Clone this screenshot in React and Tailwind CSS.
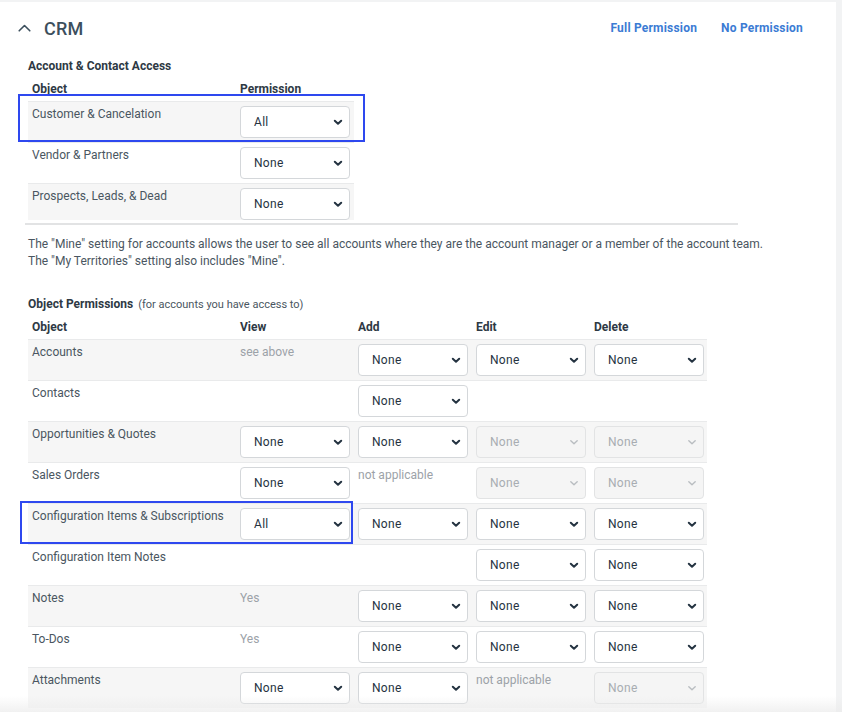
import React from 'react';

const accessRows = [
  { name: 'Customer & Cancelation', value: 'All', boxed: true },
  { name: 'Vendor & Partners', value: 'None' },
  { name: 'Prospects, Leads, & Dead', value: 'None' },
];

// cell: string = select value, {t} = muted text, {d} = disabled select, null = empty
const objectRows = [
  { name: 'Accounts', cells: [{ t: 'see above' }, 'None', 'None', 'None'] },
  { name: 'Contacts', cells: [null, 'None', null, null] },
  { name: 'Opportunities & Quotes', cells: ['None', 'None', { d: 'None' }, { d: 'None' }] },
  { name: 'Sales Orders', cells: ['None', { t: 'not applicable' }, { d: 'None' }, { d: 'None' }] },
  { name: 'Configuration Items & Subscriptions', cells: ['All', 'None', 'None', 'None'], boxed: true },
  { name: 'Configuration Item Notes', cells: [null, null, 'None', 'None'] },
  { name: 'Notes', cells: [{ t: 'Yes' }, 'None', 'None', 'None'] },
  { name: 'To-Dos', cells: [{ t: 'Yes' }, 'None', 'None', 'None'] },
  { name: 'Attachments', cells: ['None', 'None', { t: 'not applicable' }, { d: 'None' }] },
];

function Chevron({ muted }) {
  return (
    <svg width="10" height="7" viewBox="0 0 10 7" fill="none">
      <path
        d="M1.8 1.8L5 4.8L8.2 1.8"
        stroke={muted ? '#b9bdc1' : '#243341'}
        strokeWidth={muted ? '1.4' : '2'}
        strokeLinecap="round"
        strokeLinejoin="round"
      />
    </svg>
  );
}

function Select({ value, disabled }) {
  return (
    <div
      className={
        'w-[110px] h-[32px] rounded-[4px] border flex items-center justify-between pl-[13px] pr-[6px] text-[12px] tracking-[0.3px] ' +
        (disabled
          ? 'bg-[#f5f5f5] border-[#e2e3e4] text-[#a8adb2]'
          : 'bg-white border-[#d4d7da] text-[#26333f]')
      }
    >
      <span>{value}</span>
      <Chevron muted={disabled} />
    </div>
  );
}

function Cell({ cell }) {
  if (cell === null) return <div />;
  if (typeof cell === 'string')
    return (
      <div className="pt-[4px]">
        <Select value={cell} />
      </div>
    );
  if (cell.d)
    return (
      <div className="pt-[4px]">
        <Select value={cell.d} disabled />
      </div>
    );
  return <div className="pt-[4px] text-[12px] leading-[16px] text-[#9ca2a8]">{cell.t}</div>;
}

export default function App() {
  return (
    <div className="w-[842px] h-[712px] bg-[#f2f3f4] pt-[2px] pr-[6px] overflow-hidden relative font-['Roboto','Liberation_Sans',sans-serif]">
      <div className="bg-white h-full">
        {/* Section header */}
        <div className="h-[52px] flex items-center pl-[18px] pr-[33px]">
          <svg width="13" height="8" viewBox="0 0 13 8" fill="none" className="mb-[1px]">
            <path d="M1.2 6.8L6.5 1.5L11.8 6.8" stroke="#3c4f5d" strokeWidth="1.6" strokeLinecap="round" strokeLinejoin="round" />
          </svg>
          <span className="ml-[13px] text-[18px] font-medium text-[#3c4f5d] tracking-[0.2px]">CRM</span>
          <div className="ml-auto flex gap-[24px] text-[12px] font-bold text-[#3b7bd4] tracking-[0.2px]">
            <span>Full Permission</span>
            <span>No Permission</span>
          </div>
        </div>

        <div className="pl-[28px] text-[#4a5661]">
          {/* Account & Contact Access */}
          <div className="mt-[4px] text-[12px] leading-[16px] font-bold text-[#2e3944]">Account &amp; Contact Access</div>
          <div className="mt-[7px] grid grid-cols-[212px_114px] text-[12px] leading-[16px] font-bold text-[#2e3944] pb-[4px]">
            <div className="pl-[4px]">Object</div>
            <div>Permission</div>
          </div>
          <div className="w-[326px]">
            {accessRows.map((r, i) => (
              <div
                key={r.name}
                className={
                  'relative grid grid-cols-[212px_114px] border-t border-[#e9eaeb] ' +
                  (i % 2 === 0 ? 'bg-[#f6f6f6] ' : 'bg-white ') +
                  (i === 2 ? 'h-[37px] overflow-hidden' : 'h-[41px]')
                }
              >
                <div className="pl-[4px] pt-[4px] text-[12px] leading-[16px]">{r.name}</div>
                <div className="pt-[4px]">
                  <Select value={r.value} />
                </div>
                {r.boxed && (
                  <div className="absolute left-[-10px] top-[-8px] w-[347px] h-[48px] border-2 border-[#2e48ef] pointer-events-none" />
                )}
              </div>
            ))}
          </div>

          <div className="ml-[-3px] mt-[3px] w-[713px] h-[2px] bg-[#e2e3e4]" />

          <p className="mt-[11px] text-[12px] leading-[17px] text-[#4a5661]">
            The "Mine" setting for accounts allows the user to see all accounts where they are the account manager or a member of the account team.
            <br />
            The "My Territories" setting also includes "Mine".
          </p>

          {/* Object Permissions */}
          <div className="mt-[26px] text-[12px] leading-[16px]">
            <span className="font-bold text-[#2e3944]">Object Permissions</span>
            <span className="ml-[5px] text-[11px] text-[#4a5661]">(for accounts you have access to)</span>
          </div>
          <div className="mt-[6px] grid grid-cols-[212px_118px_118px_118px_113px] text-[12px] leading-[16px] font-bold text-[#2e3944] pb-[4px]">
            <div className="pl-[4px]">Object</div>
            <div>View</div>
            <div>Add</div>
            <div>Edit</div>
            <div>Delete</div>
          </div>
          <div className="w-[679px]">
            {objectRows.map((r, i) => (
              <div
                key={r.name}
                className={
                  'relative h-[41px] grid grid-cols-[212px_118px_118px_118px_113px] border-t border-[#e9eaeb] ' +
                  (i % 2 === 0 ? 'bg-[#f6f6f6]' : 'bg-white')
                }
              >
                <div className="pl-[4px] pt-[4px] text-[12px] leading-[16px]">{r.name}</div>
                {r.cells.map((c, j) => (
                  <Cell key={j} cell={c} />
                ))}
                {r.boxed && (
                  <div className="absolute left-[-8px] top-[-3px] w-[333px] h-[43px] border-2 border-[#2e48ef] pointer-events-none" />
                )}
              </div>
            ))}
          </div>
        </div>
      </div>
      {/* bottom fade */}
      <div className="absolute left-0 right-0 bottom-0 h-[16px] bg-gradient-to-b from-transparent to-[#ebebeb]/70 pointer-events-none" />
    </div>
  );
}
